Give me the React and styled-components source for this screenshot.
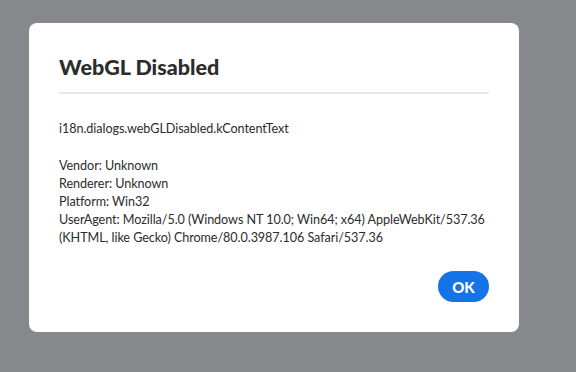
import React from "react";
import styled, { createGlobalStyle } from "styled-components";

const Global = createGlobalStyle`
  html, body { margin: 0; padding: 0; background: #86888c; }
  body { width: 576px; height: 372px; overflow: hidden; font-family: Lato, "Noto Sans", sans-serif; }
`;

const Backdrop = styled.div`
  width: 576px;
  height: 372px;
  box-sizing: border-box;
  padding: 23px 0 0 29px;
  background: #86888c;
`;

const Dialog = styled.section`
  width: 490px;
  height: 309px;
  box-sizing: border-box;
  background: #ffffff;
  border-radius: 8px;
  padding: 30px 30px 30px;
  display: flex;
  flex-direction: column;
`;

const Title = styled.h2`
  margin: 0;
  font-family: Lato, "Open Sans", sans-serif;
  font-weight: 900;
  font-size: 21.5px;
  line-height: 28px;
  color: #2c2c2c;
  padding-bottom: 11px;
  border-bottom: 2px solid #e8e8e8;
`;

const Content = styled.div`
  margin-top: 26px;
  font-size: 12.6px;
  letter-spacing: -0.06px;
  line-height: 18px;
  color: #2c2c2c;
  flex: 1;
`;

const Para = styled.p`
  margin: 0 0 ${(p) => (p.$gap ? "19px" : "0")};
`;

const Footer = styled.div`
  display: flex;
  justify-content: flex-end;
`;

const Button = styled.button`
  height: 31px;
  min-width: 51px;
  padding: 0 14px;
  border: none;
  border-radius: 16px;
  background: #1473e6;
  color: #ffffff;
  font-family: Lato, "Open Sans", sans-serif;
  font-weight: 900;
  font-size: 15px;
  cursor: pointer;
`;

export default function App() {
  return (
    <>
      <Global />
      <Backdrop>
        <Dialog>
          <Title>WebGL Disabled</Title>
          <Content>
            <Para $gap>i18n.dialogs.webGLDisabled.kContentText</Para>
            <Para>Vendor: Unknown</Para>
            <Para>Renderer: Unknown</Para>
            <Para>Platform: Win32</Para>
            <Para>
              UserAgent: Mozilla/5.0 (Windows NT 10.0; Win64; x64) AppleWebKit/537.36 (KHTML, like Gecko) Chrome/80.0.3987.106 Safari/537.36
            </Para>
          </Content>
          <Footer>
            <Button>OK</Button>
          </Footer>
        </Dialog>
      </Backdrop>
    </>
  );
}
